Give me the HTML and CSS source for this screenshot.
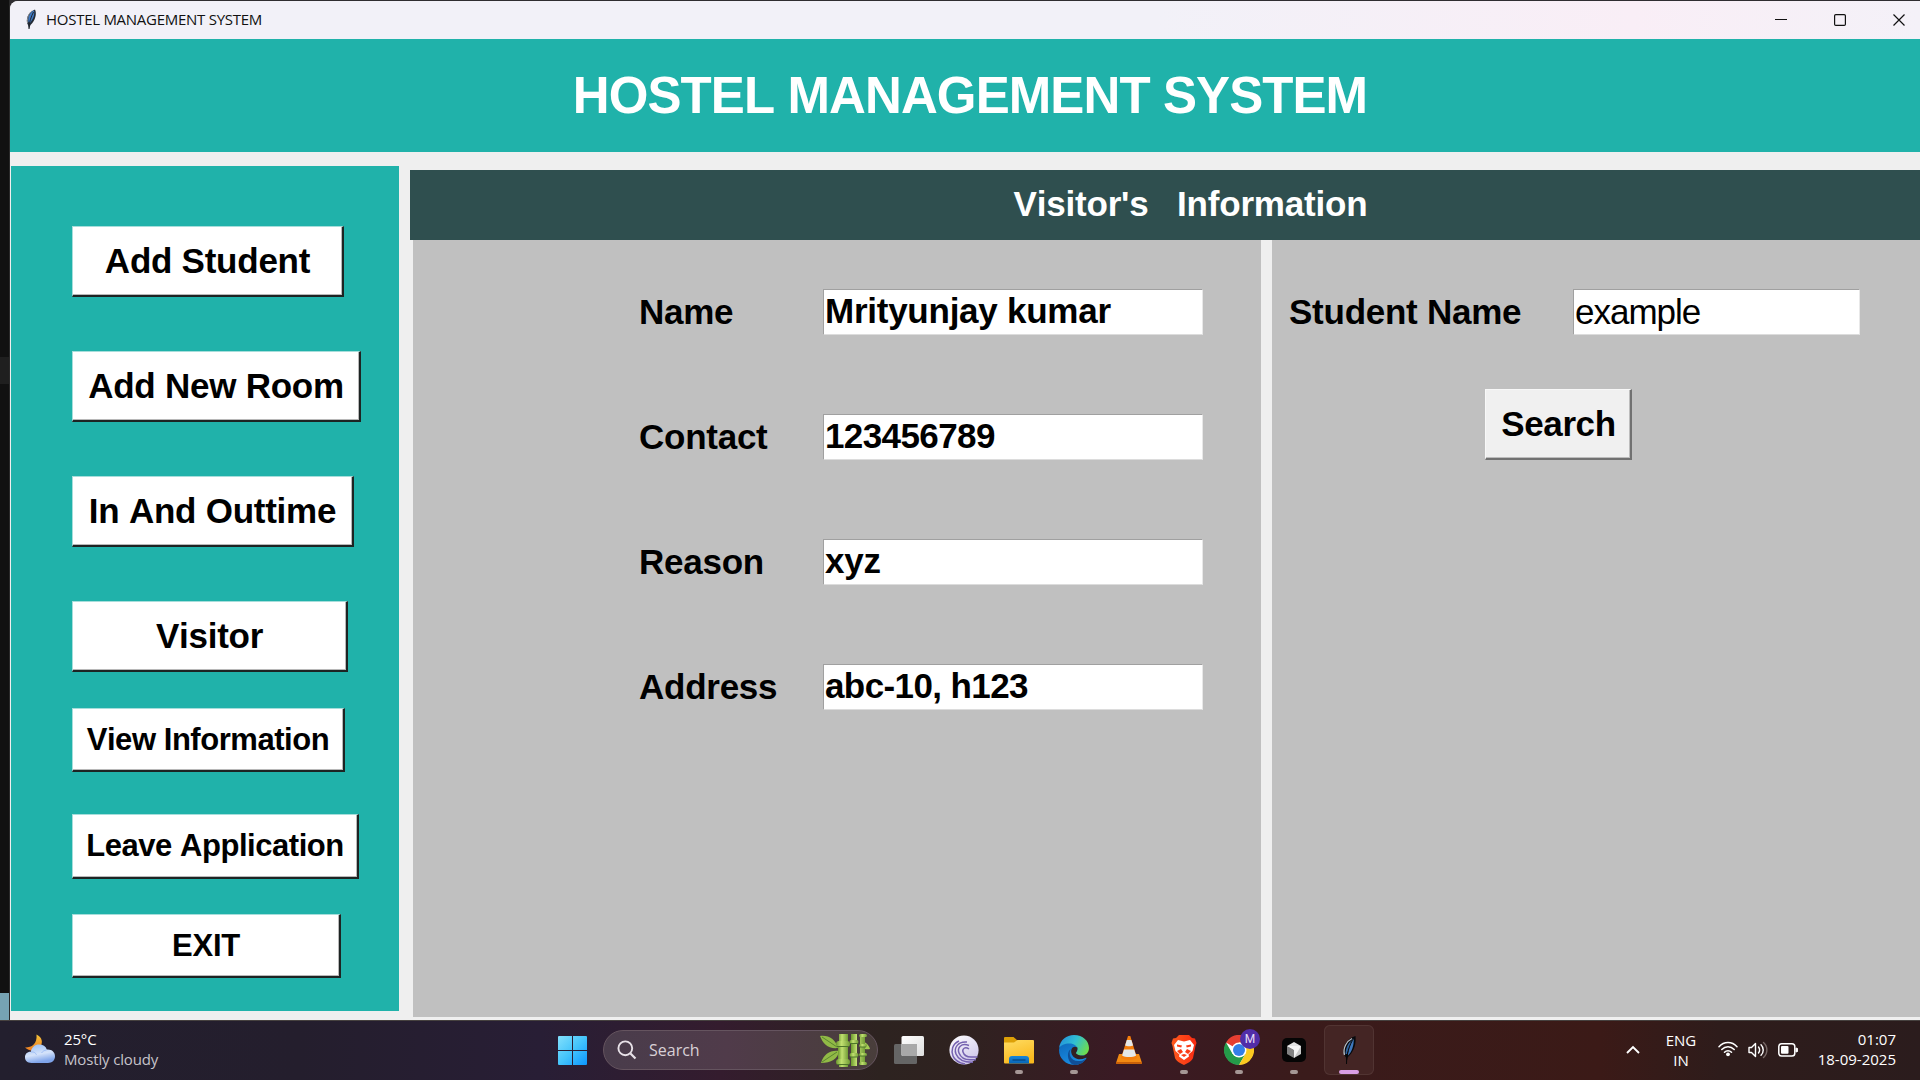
FILE: index.html
```html
<!DOCTYPE html>
<html lang="en">
<head>
<meta charset="utf-8">
<title>HOSTEL MANAGEMENT SYSTEM</title>
<link rel="stylesheet" href="styles.css">
</head>
<body>
<div class="desktop">
  <div class="edge"><span class="edge-tab"></span><span class="edge-status"></span></div>
  <main class="window">
    <div class="titlebar">
      <svg class="app-icon" width="12" height="21" viewBox="0 0 12 21"><path d="M4 20 3 16C0 11 3 3 10 .5c2 4 .5 11-4.500 15.500z" fill="#222a35"/><path d="M3.500 13C2.500 8 5 3 9 1.500 10 6 8 10 5 14z" fill="#3f79c4"/><path d="M2.500 14C2 8 4 4 7 2" stroke="#8b8f96" fill="none"/><path d="M4 20C4 13 6 8 8.500 3" stroke="#20242a" fill="none"/></svg>
      <span class="title-text">HOSTEL MANAGEMENT SYSTEM</span>
      <div class="window-controls">
        <svg width="12" height="12" viewBox="0 0 12 12"><path d="M0 5.500h12" stroke="#111" stroke-width="1.200"/></svg>
        <svg width="12" height="12" viewBox="0 0 12 12"><rect x=".6" y=".6" width="10.800" height="10.800" rx="1.200" fill="none" stroke="#111" stroke-width="1.200"/></svg>
        <svg width="12" height="12" viewBox="0 0 12 12"><path d="m.5.5 11 11M11.500.5l-11 11" stroke="#111" stroke-width="1.200"/></svg>
      </div>
    </div>
    <header class="banner"><h1>HOSTEL MANAGEMENT SYSTEM</h1></header>
    <div class="body">
      <nav class="sidebar">
        <button class="nav-btn add-student">Add Student</button>
        <button class="nav-btn add-room">Add New Room</button>
        <button class="nav-btn in-out">In And Outtime</button>
        <button class="nav-btn visitor">Visitor</button>
        <button class="nav-btn small view-info">View Information</button>
        <button class="nav-btn small leave">Leave Application</button>
        <button class="nav-btn small exit">EXIT</button>
      </nav>
      <section class="content">
        <h2 class="section-title">Visitor's   Information</h2>
        <div class="panels">
          <form class="panel form-panel">
            <label>Name</label><input class="field" value="Mrityunjay kumar">
            <label>Contact</label><input class="field numeric" value="123456789">
            <label>Reason</label><input class="field" value="xyz">
            <label>Address</label><input class="field numeric" value="abc-10, h123">
          </form>
          <div class="panel search-panel">
            <div class="search-row"><label>Student Name</label><input class="field student" value="example"></div>
            <button class="search-btn" type="button">Search</button>
          </div>
        </div>
      </section>
    </div>
  </main>
</div>
<footer class="taskbar">
  <div class="weather">
    <svg width="30" height="30" viewBox="0 0 30 30"><defs><linearGradient id="moon" x2="0" y2="1"><stop stop-color="#f6c439"/><stop offset="1" stop-color="#ee7d22"/></linearGradient><linearGradient id="cloud" x2=".3" y2="1"><stop stop-color="#96bdf5"/><stop offset=".6" stop-color="#d5e3fa"/><stop offset="1" stop-color="#7fa4ea"/></linearGradient></defs><path d="M11.500.5c6 3 6.500 8 4 12-3 5-11 5.500-15.500 1 6 .3 12.500-3 11.500-13z" fill="url(#moon)"/><path d="M6.500 29C2 29 0 26.500 0 23.300s2.300-5.700 5.800-5.500c1-4.500 4-7.200 8.200-7.200 4 0 6.700 1.800 7.800 5C26.500 15 30 18 30 22.300 30 26.500 27 29 23 29z" fill="url(#cloud)"/><path d="M6 18c3-.5 5 1 5.500 3M21.500 16c-2.500.3-4 1.500-5 3" stroke="#85aaf0" fill="none" opacity=".6"/></svg>
    <div class="weather-text"><span>25°C</span><span class="muted">Mostly cloudy</span></div>
  </div>
  <div class="apps">
    <svg class="start" width="29" height="29" viewBox="0 0 29 29"><defs><linearGradient id="win" x2="1" y2="1"><stop stop-color="#83e0fc"/><stop offset=".5" stop-color="#44c4fb"/><stop offset="1" stop-color="#0c96ff"/></linearGradient></defs><path d="M1 0h13v14H0V1q0-1 1-1zM15 0h13q1 0 1 1v13H15zM0 15h14v14H1q-1 0-1-1zM15 15h14v13q0 1-1 1H15z" fill="url(#win)"/></svg>
    <div class="search-pill">
      <svg width="20" height="20" viewBox="0 0 20 20"><circle cx="8.300" cy="8.300" r="6.900" fill="none" stroke="#e8e2e8" stroke-width="1.900"/><path d="m13.500 13.500 5 5" stroke="#e8e2e8" stroke-width="2.200"/></svg>
      <span>Search</span>
      <svg class="bamboo" width="51" height="34" viewBox="0 0 51 34"><defs><linearGradient id="stem"><stop stop-color="#6d9a2e"/><stop offset=".4" stop-color="#c1e070"/><stop offset="1" stop-color="#729c36"/></linearGradient></defs><path d="M0 3c9-1 15 3 18 12C8 16 3 11 0 3zM1 30c3-9 9-13 18-12-1 8-8 12-18 12z" fill="#91ba46"/><path d="m2 4 15 10M2 29l15-10" stroke="#5b8430"/><path d="M40 7c6 2 9 5 10 9-5 1-9-1-10-5z" fill="#a4cb54"/><g fill="url(#stem)"><path d="M19 1h9v8h-9zM18 13h10v15H18zM19 30h9v4h-9z"/><rect x="16" y="8" width="14" height="6" rx="3"/><rect x="16" y="26" width="14" height="6" rx="3"/><path d="M31 1h6v32h-6zM40 2h5v30h-5z"/><rect x="29.500" y="7" width="9" height="3.500" rx="1.700"/><rect x="29.500" y="20" width="9" height="4" rx="2"/><rect x="39" y="1" width="8" height="3" rx="1.500"/><rect x="39" y="11" width="8" height="3" rx="1.500"/><rect x="39" y="20" width="8" height="3" rx="1.500"/><rect x="39" y="29" width="8" height="3" rx="1.500"/></g><path d="M17 13.500h12M17 31.500h12M30 10.500h8M30 24h8M40 14h6M40 23h6" stroke="#4d762a" fill="none"/></svg>
    </div>
    <div class="task"><svg width="30" height="30" viewBox="0 0 30 30"><defs><linearGradient id="tv" x2="1" y2="1"><stop stop-color="#fff"/><stop offset="1" stop-color="#dedede"/></linearGradient></defs><rect x="0" y="9" width="23" height="20" rx="1.500" fill="#656565"/><rect x="7.500" y="1" width="22.500" height="20" rx="1.500" fill="url(#tv)"/><path d="M7.500 9H23v12H9q-1.500 0-1.500-1.500z" fill="#a9a9a9"/></svg></div>
    <div class="task"><svg width="30" height="30" viewBox="0 0 30 30"><defs><linearGradient id="bt" x2=".6" y2="1"><stop stop-color="#fff"/><stop offset="1" stop-color="#cfc7ea"/></linearGradient></defs><circle cx="15" cy="15" r="14.600" fill="url(#bt)"/><g fill="none" stroke="#7562b0" stroke-width="1.500"><path d="M20 14c-4-3-7 0-6 3s4 5 8 5h6.500"/><path d="M20 10.500c-8-3-12 2.500-10 7.500s7 6.800 11 6.800h6"/><path d="M18 7C9 6 4.500 13 7 19s9 8.500 17 8.300"/><path d="M10 6C3 9 2 16 4 21s7 7 12 8"/></g></svg></div>
    <div class="task"><svg width="30" height="30" viewBox="0 0 30 30"><defs><linearGradient id="fold" x2=".4" y2="1"><stop stop-color="#ffdc62"/><stop offset="1" stop-color="#f9b91f"/></linearGradient><linearGradient id="foldb" x2="0" y2="1"><stop stop-color="#1686d9"/><stop offset="1" stop-color="#0965b6"/></linearGradient></defs><path d="M0 3q0-1 1-1h8.500l4 3.500V9H0z" fill="#dda007"/><path d="M0 7.500h10L13.500 5H29q1 0 1 1v21.500q0 1-1 1H1q-1 0-1-1z" fill="url(#fold)"/><path d="M5 28.500V24q0-3 3-3h14q3 0 3 3v4.500z" fill="url(#foldb)"/><path d="M8.500 25h13" stroke="#064987" stroke-width="1.400"/></svg><i class="on"></i></div>
    <div class="task"><svg width="30" height="30" viewBox="0 0 30 30"><defs><linearGradient id="e1" x1="0" y1=".2" x2="1" y2=".6"><stop stop-color="#2390dc"/><stop offset=".5" stop-color="#31bfd2"/><stop offset="1" stop-color="#6ddd50"/></linearGradient><linearGradient id="e2" x2=".6" y2="1"><stop stop-color="#0d66b8"/><stop offset="1" stop-color="#1a8fe4"/></linearGradient></defs><path d="M0 15A15 15 0 0 0 15 30c6 0 10-3 12.500-7L24 18 15 5 1 9z" fill="url(#e2)"/><path d="M.2 13C1 5 7.500 0 15 0c9 0 15 6 15 13 0 5-3.500 7.500-7.500 7.500-4 0-5.500-1.500-5.500-2.500 0-1 1.500-1.500 1.500-4 0-3-3.500-5.500-8-5.500C5.500 8.500 1.500 10.500.2 13z" fill="url(#e1)"/><path d="M12 14c-3 4-1 13 9 12 3 0 5-1.500 6.500-3-3 5-7 7-12 7C9 29 6.500 17 12 14z" fill="#104f96"/><path d="M18.400 12.500c-4-2.500-7 1-6 5.500 1.300 5.500 7.500 8 14 5l1.800-1c-.3-1-1.200-1.800-2.200-1.800-1.500.4-3.200.5-4.500.3-3-.4-4.500-1.800-4.500-2.500.2-1 1.700-2 1.400-5.500z" fill="#332022"/></svg><i class="on"></i></div>
    <div class="task"><svg width="26" height="30" viewBox="0 0 26 30"><path d="M3 19h20l3 9q0 .8-1 .8H1q-1 0-1-.8z" fill="#f28a12"/><path d="M0 27h26v1.800H0z" fill="#c96008"/><path d="M12 1h2.300L21 23c-3 2.500-13 2.500-16 0z" fill="#f47e0d"/><path d="m10.800 5h4.600l1.700 5.500c-2 1-6 1-8 0zM8 14.500h10.200l1.900 6c-3 2-11 2-14 0z" fill="#e4e8ea"/></svg></div>
    <div class="task"><svg width="26" height="30" viewBox="0 0 26 30"><defs><linearGradient id="br" x2="1"><stop stop-color="#ff5a1d"/><stop offset="1" stop-color="#f92a12"/></linearGradient></defs><path d="M8 0h10l3 3 3 .5 1.500 4.500-1 3L22 23c-1 3-5 5-9 7-4-2-8-4-9-7L1.500 11l-1-3L2 3.500 5 3z" fill="url(#br)"/><path d="M7 5l6 1.500L19 5l4 5-1.500 6-4 3.500.5 2L13 25l-5-3.500.5-2-4-3.500L3 10z" fill="#fff"/><path d="M6 9.500l5 1-.8 2L6 11.500zM20 9.500l-5 1 .8 2 4.200-1zM10 14l2 3-3 2-3-3zM16 14l-2 3 3 2 3-3zM10 20l3-1 3 1-3 2z" fill="#fb3c16"/></svg><i class="on"></i></div>
    <div class="task"><svg width="30" height="30" viewBox="0 0 30 30"><circle cx="15" cy="15" r="14.500" fill="#fff"/><path d="M15 15 2 7.500A15 15 0 0 1 28 7.500H15z" fill="#e63e31"/><path d="M15 22 21.500 18.700 15 30A15 15 0 0 1 2 7.500L8.500 18.700z" fill="#249b49"/><path d="M15 7.500h13A15 15 0 0 1 15 30l6.500-11.300z" fill="#fcca20"/><circle cx="15" cy="15" r="7.500" fill="#fff"/><circle cx="15" cy="15" r="6" fill="#347fe8"/></svg><b class="badge">M</b><i class="on"></i></div>
    <div class="task"><svg width="24" height="30" viewBox="0 0 24 30"><rect y="3" width="24" height="24" rx="5" fill="#050505"/><path d="m12 7 7 4-7 4-7-4z" fill="#e2e2e2"/><path d="M5 11l7 4v8l-7-4z" fill="#828282"/><path d="m19 11-7 4v8l7-4z" fill="#c9c9c9"/><path d="m5 11 14 0-7 12v-8z" fill="#f4f4f4"/></svg><i class="on"></i></div>
    <div class="task active"><svg width="16" height="30" viewBox="0 0 16 30"><path d="M5.500 29 5 22.500C-1 16 4 4 14.500 1c.8 8-1.500 16-8 21.500z" fill="#07090c"/><path d="M3.500 20C1.500 13 6 6 11 3.500" stroke="#b9bdc3" stroke-width="1.300" fill="none"/><path d="M12.800 3C13 10 11 17 7 20.500 7 13 9 7 12.800 3z" fill="#3f78bd"/><path d="M4.500 19C4.500 14 7 8 10 6l-4 13z" fill="#30639f"/><path d="M5.500 29C5.500 20 8 10 13 3" stroke="#080808" fill="none"/></svg><i class="current"></i></div>
  </div>
  <div class="tray">
    <svg class="chev" width="14" height="9" viewBox="0 0 14 9"><path d="m1 8 6-6 6 6" fill="none" stroke="#fff" stroke-width="1.900"/></svg>
    <div class="lang"><span>ENG</span><span>IN</span></div>
    <svg class="wifi" width="20" height="16" viewBox="0 0 20 16"><g fill="none" stroke="#fff" stroke-width="1.500" stroke-linecap="round"><path d="M1 5.700C6 .2 14 .2 19 5.700M3.800 8.500c3.500-3.800 8.900-3.800 12.400 0M6.500 11.300c2-2.200 5-2.200 7 0"/></g><circle cx="10" cy="13.300" r="1.900" fill="#fff"/></svg>
    <svg class="sound" width="20" height="18" viewBox="0 0 20 18"><g fill="none" stroke="#fff" stroke-width="1.400" stroke-linejoin="round" stroke-linecap="round"><path d="M1 6.500h2.500L7.500 2.500v13l-4-4H1zM10.500 6c1.500 2 1.500 4 0 6M13 3.800c3 3 3 7.500 0 10.500"/><path d="M15.500 1.500c4.500 4 4.500 11 0 15" stroke="#786967"/></g></svg>
    <svg class="battery" width="20" height="14" viewBox="0 0 20 14"><rect x=".8" y=".8" width="16" height="12.200" rx="2.800" fill="none" stroke="#fff" stroke-width="1.500"/><rect x="3" y="3" width="7.500" height="7.800" rx="1" fill="#fff"/><path d="M18 5v4q2 0 2-2t-2-2z" fill="#fff" stroke="#fff"/></svg>
    <div class="clock"><span>01:07</span><span>18-09-2025</span></div>
  </div>
</footer>
</body>
</html>
```
FILE: styles.css
```css
* { box-sizing: border-box; }

body {
  margin: 0;
  width: 1920px;
  height: 1080px;
  overflow: hidden;
  display: flex;
  flex-direction: column;
  background: #111;
  font-family: "Liberation Sans", Arial, sans-serif;
}

h1, h2 { margin: 0; }

.desktop {
  height: 1020px;
  display: flex;
  padding-top: 1px;
  background: #2f2d31;
}

.edge {
  width: 10px;
  margin-top: -1px;
  flex: none;
  display: flex;
  flex-direction: column;
  background: #111;
  border-right: 1px solid #2a2a2a;
}
.edge-tab { height: 27px; margin-top: 357px; background: #1f1f1f; }
.edge-status { height: 27px; margin-top: auto; background: #76a3b3; }

.window {
  flex: 1;
  display: flex;
  flex-direction: column;
  background: #efefef;
  border-radius: 8px 0 0 0;
  overflow: hidden;
}

.titlebar {
  height: 38px;
  flex: none;
  display: flex;
  align-items: center;
  padding: 0 15px;
  background: linear-gradient(90deg, #f2f1f8 0, #f2f1f8 60%, #f9eef6 85%, #f4f1f8 100%);
}
.app-icon { margin-top: -2px; }
.title-text {
  margin: -2px 0 0 9px;
  font: 15px/20px "Open Sans", "Noto Sans", sans-serif;
  letter-spacing: -0.27px;
  color: #111;
  white-space: nowrap;
}
.window-controls { margin-left: auto; display: flex; gap: 47px; }

.banner {
  height: 113px;
  flex: none;
  display: flex;
  align-items: center;
  justify-content: center;
  padding-left: 10px;
  background: #20b2aa;
  color: #fff;
}
.banner h1 { font-size: 51px; line-height: 56px; letter-spacing: -0.9px; font-kerning: none; white-space: nowrap; }

.body {
  flex: 1;
  display: flex;
  gap: 11px;
  padding: 14px 0 0 1px;
  min-height: 0;
}

.sidebar {
  width: 388px;
  height: 845px;
  flex: none;
  display: flex;
  flex-direction: column;
  align-items: flex-start;
  padding: 60px 0 0 61px;
  background: #20b2aa;
}

.nav-btn {
  height: 71px;
  flex: none;
  margin: 0 0 54px;
  padding: 0 0 1px;
  border: solid;
  border-width: 1px 2px 2px 1px;
  border-color: #a6dedb #1d2423 #1d2423 #a6dedb;
  background: #fff;
  box-shadow: inset -1px -1px 0 #b8b8b8;
  color: #000;
  font: bold 35px/38px "Liberation Sans", Arial, sans-serif;
  letter-spacing: -0.25px;
  font-kerning: none;
  white-space: nowrap;
}
.nav-btn.small { height: 65px; padding: 0; font-size: 31px; letter-spacing: -0.45px; }
.nav-btn.add-student { width: 272px; }
.nav-btn.add-room { width: 289px; }
.nav-btn.in-out { width: 282px; }
.nav-btn.visitor { width: 276px; margin-bottom: 36px; }
.nav-btn.small.view-info { width: 273px; height: 64px; margin-bottom: 42px; }
.nav-btn.leave { width: 287px; margin-bottom: 35px; }
.nav-btn.small.exit { width: 269px; height: 64px; margin-bottom: 0; letter-spacing: -0.2px; }

.content { flex: 1; display: flex; flex-direction: column; padding-top: 4px; }

.section-title {
  height: 70px;
  flex: none;
  padding-left: 51px;
  background: #2f4f4f;
  color: #fff;
  font-size: 35px;
  line-height: 68px;
  letter-spacing: -0.2px;
  font-kerning: none;
  text-align: center;
  white-space: pre;
}

.panels { display: grid; grid-template-columns: 848px 1fr; gap: 11px; padding-left: 3px; height: 777px; }
.panel { background: #c0c0c0; }

.form-panel {
  display: grid;
  grid-template-columns: 184px 380px;
  grid-auto-rows: 46px;
  row-gap: 79px;
  padding: 49px 0 0 226px;
}

label {
  font-size: 35px;
  font-weight: bold;
  line-height: 46px;
  letter-spacing: -0.25px;
  font-kerning: none;
  white-space: nowrap;
}

.field {
  width: 380px;
  height: 46px;
  padding: 0 0 2px 1px;
  border: 1px solid;
  border-color: #a0a0a0 #e8e8e8 #dcdcdc #a0a0a0;
  background: #fff;
  color: #000;
  font: bold 35px/40px "Liberation Sans", Arial, sans-serif;
  letter-spacing: -0.25px;
  font-kerning: none;
  outline: 0;
}
.field.numeric { letter-spacing: -0.6px; }
.field.student { width: 287px; padding-bottom: 0; font-weight: normal; letter-spacing: -1px; }

.search-panel { padding: 49px 0 0 17px; }
.search-row { display: grid; grid-template-columns: 284px 287px; }
.search-btn {
  display: block;
  width: 147px;
  height: 71px;
  margin: 54px 0 0 196px;
  padding: 0 0 1px 1px;
  border: solid;
  border-width: 1px 2px 2px 1px;
  border-color: #f8f8f8 #717171 #717171 #f8f8f8;
  box-shadow: inset -1px -1px 0 #bcbcbc;
  background: #f0f0f0;
  color: #000;
  font: bold 35px/38px "Liberation Sans", Arial, sans-serif;
  letter-spacing: -0.4px;
}

.taskbar {
  height: 60px;
  flex: none;
  display: grid;
  grid-template-columns: 558px 1fr 320px;
  border-top: 1px solid #46413f;
  background: linear-gradient(90deg, #231f2e 0, #241e2d 300px, #281e35 540px, #341c2e 720px, #2d2320 880px, #2f2220 960px, #3a1a24 1120px, #3a1b1b 1300px, #3b1a17 1600px, #2e1c1b 1720px, #2b1c1d 1920px);
  color: #fff;
  font: 15px/20px "Open Sans", "Noto Sans", sans-serif;
}
.weather { display: flex; padding: 13px 0 0 25px; }
.weather-text { display: flex; flex-direction: column; margin: -5px 0 0 9px; letter-spacing: -0.15px; }
.muted { color: #c6c3ca; }

.apps { display: flex; align-items: flex-start; }
.start { margin-top: 15px; }
.search-pill {
  width: 275px;
  height: 40px;
  margin: 9px 3px 0 16px;
  flex: none;
  display: flex;
  align-items: center;
  padding: 0 6px 0 13px;
  border: 1px solid #65545f;
  border-radius: 20px;
  background: linear-gradient(90deg, #493c4b, #503b4a 45%, #493e3b);
  color: #d8d0d6;
  font-size: 16px;
}
.search-pill span { margin-left: 12px; }
.bamboo { margin-left: auto; }

.task {
  position: relative;
  width: 50px;
  height: 50px;
  margin: 4px 2px 0 3px;
  flex: none;
  display: flex;
  justify-content: center;
  padding-top: 10px;
}
.task.active { background: #442524; border-radius: 6px; box-shadow: inset 0 0 0 1px #513432; }
.task i { position: absolute; left: 21px; bottom: 1px; width: 8px; height: 4px; border-radius: 2px; }
.task i.on { background: #a59795; }
.task i.current { left: 15px; width: 20px; background: #da9ee4; }
.badge {
  position: absolute;
  left: 26px;
  top: 4px;
  width: 20px;
  height: 20px;
  border-radius: 50%;
  background: #512da8;
  color: #e5dcf7;
  font: 12px/20px Roboto, sans-serif;
  text-align: center;
}

.tray { display: flex; align-items: flex-start; padding-left: 26px; }
.chev { margin-top: 24px; }
.lang { width: 28px; margin: 9px 0 0 27px; display: flex; flex-direction: column; align-items: center; }
.wifi { margin: 20px 0 0 23px; }
.sound { margin: 20px 0 0 10px; }
.battery { margin: 22px 0 0 10px; }
.clock { margin: 8px 24px 0 auto; display: flex; flex-direction: column; align-items: flex-end; white-space: nowrap; }
```
